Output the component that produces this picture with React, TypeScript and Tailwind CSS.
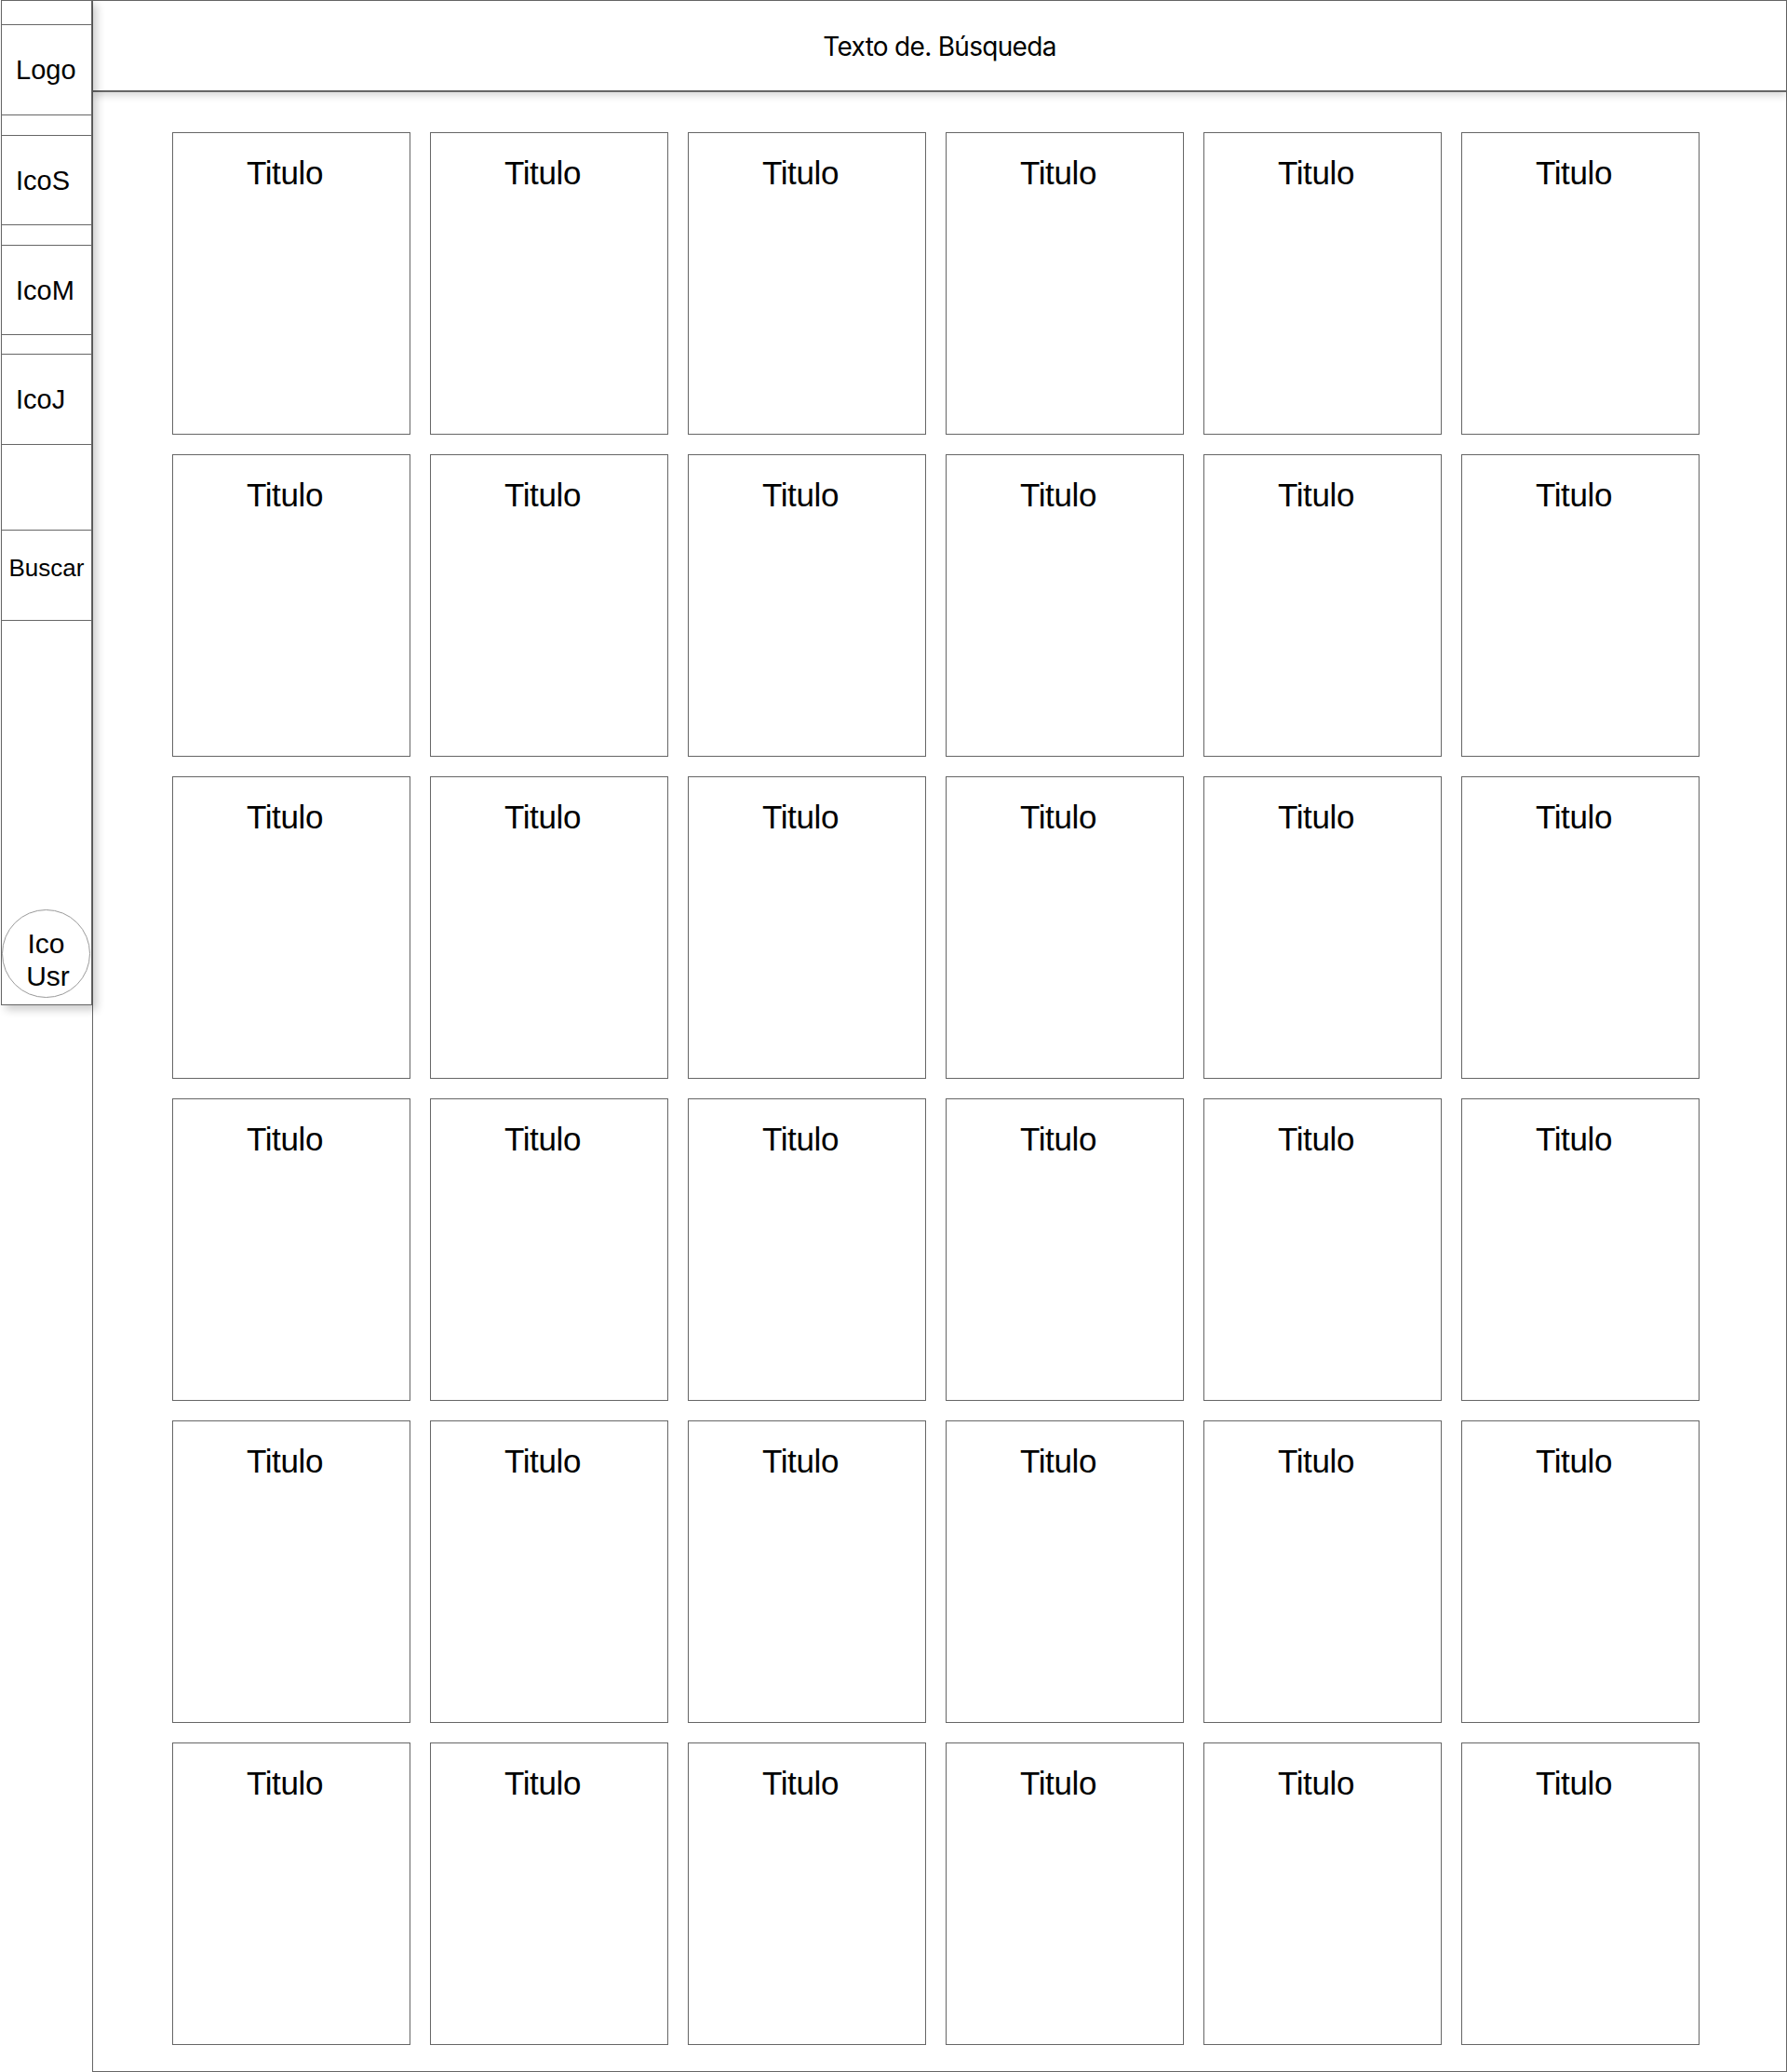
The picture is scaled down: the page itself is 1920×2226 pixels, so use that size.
import React from 'react';

const sideItems = [
  { id: 'logo', label: 'Logo', mt: 'mt-[25px]', h: 'h-[98px]' },
  { id: 'icos', label: 'IcoS', mt: 'mt-[21px]', h: 'h-[97px]' },
  { id: 'icom', label: 'IcoM', mt: 'mt-[21px]', h: 'h-[97px]' },
  { id: 'icoj', label: 'IcoJ', mt: 'mt-[20px]', h: 'h-[98px]' },
];

const cards = Array.from({ length: 36 }, (_, i) => ({ id: `card-${i + 1}`, title: 'Titulo' }));

const Sidebar: React.FC = () => (
  <aside className="relative z-10 ml-px flex h-[1080px] w-[98px] shrink-0 flex-col border border-[#666] bg-white shadow-[5px_5px_9px_rgba(0,0,0,0.2)] font-['Liberation_Sans',Arial,sans-serif] text-black">
    {sideItems.map((item) => (
      <div
        key={item.id}
        className={`${item.mt} ${item.h} flex items-center border-y border-[#666] pl-[15px] pt-[2px] text-[29px]`}
      >
        {item.label}
      </div>
    ))}

    {/* Buscar */}
    <div className="mt-[91px] flex h-[98px] items-center justify-center border-y border-[#666] pb-[16px] text-[26px]">
      Buscar
    </div>

    <div className="flex-1" />

    {/* User icon */}
    <div className="mb-[7px] flex h-[95px] w-[95px] flex-col items-center justify-center rounded-full border border-[#9a9a9a] pt-3 text-[30px] leading-[35px]">
      <span>Ico</span>
      <span className="pl-1">Usr</span>
    </div>
  </aside>
);

export default function App() {
  return (
    <div className="flex h-[2226px] w-[1920px] bg-white">
      <Sidebar />

      <main className="flex h-full w-[1821px] flex-col border border-[#666]">
        {/* Header */}
        <header className="relative flex h-[98px] shrink-0 items-center justify-center border-b-2 border-[#666] pt-[2px] shadow-[0_4px_8px_rgba(0,0,0,0.15)] font-['Inter',sans-serif] text-[28px] tracking-[-0.025em] text-black">
          Texto de. Búsqueda
        </header>

        {/* Grid */}
        <section className="grid grid-cols-[repeat(6,256px)] gap-[21px] pl-[85px] pt-[43px]">
          {cards.map((card) => (
            <div
              key={card.id}
              className="flex h-[325px] flex-col items-center border border-[#666] pr-[14px] pt-[17px] font-['Liberation_Sans',Arial,sans-serif] text-[35px] tracking-[-0.01em] text-black"
            >
              {card.title}
            </div>
          ))}
        </section>
      </main>
    </div>
  );
}
